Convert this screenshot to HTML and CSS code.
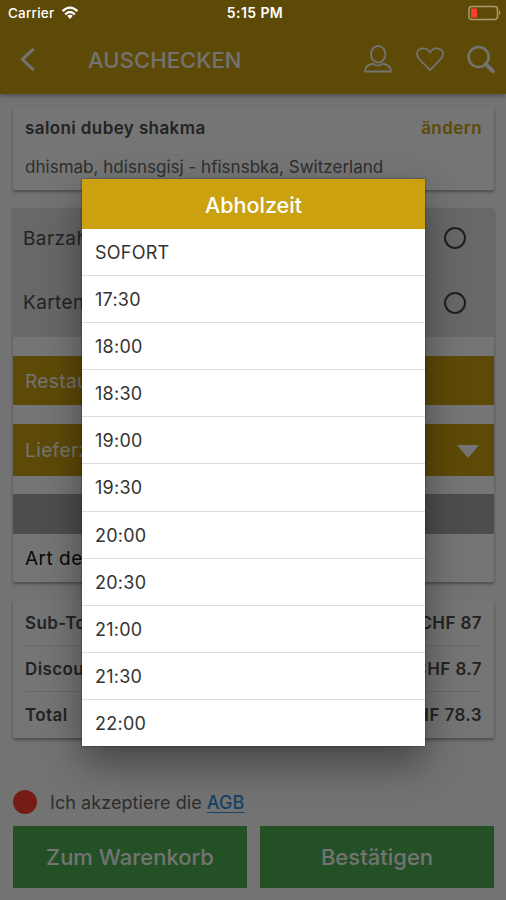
FILE: index.html
```html
<!DOCTYPE html>
<html lang="de">
<head>
<meta charset="utf-8">
<title>Auschecken</title>
<link rel="stylesheet" href="styles.css">
</head>
<body>
<div class="app">
  <header class="header">
    <svg class="back" width="16" height="26" viewBox="0 0 16 26"><path d="M13.6 1.8 2.4 12.4 13.6 23"/></svg>
    <h1 class="title">AUSCHECKEN</h1>
    <div class="actions">
      <svg width="28" height="30" viewBox="0 0 28 30"><ellipse cx="14.2" cy="9.3" rx="7.2" ry="8.3"/><path d="M9 18.6C5 19.6 1.2 20.6 1.2 26.5H26.8C26.8 20.6 23 19.6 19 18.6 16 21.2 12 21.2 9 18.6Z"/></svg>
      <svg width="28" height="30" viewBox="0 0 28 30"><path d="M14 25.2 3.2 14C-1.4 8.4 1.8 3.3 7.4 3.3 10.8 3.3 12.8 5 14 7.6 15.2 5 17.2 3.3 20.6 3.3 26.2 3.3 29.4 8.4 24.8 14Z"/></svg>
      <svg class="search" width="28" height="30" viewBox="0 0 28 30"><circle cx="11.6" cy="12" r="10"/><path class="handle" d="m18.8 19.2 7 7"/></svg>
    </div>
  </header>

  <main class="content">
    <section class="card address">
      <div class="line"><b>saloni dubey shakma</b><a class="change">ändern</a></div>
      <p>dhismab, hdisnsgisj - hfisnsbka, Switzerland</p>
    </section>

    <section class="card order">
      <div class="payments">
        <div class="payment"><span>Barzah</span><i class="radio"></i></div>
        <div class="payment"><span>Karten</span><i class="radio"></i></div>
      </div>
      <div class="bar restaurant">Restau</div>
      <div class="bar delivery">Lieferz<i class="caret"></i></div>
      <div class="strip"></div>
      <div class="kind">Art de</div>
    </section>

    <section class="card totals">
      <div class="line"><span>Sub-To</span><span>CHF 87</span></div>
      <div class="line"><span>Discou</span><span>CHF 8.7</span></div>
      <div class="line"><span>Total</span><span>CHF 78.3</span></div>
    </section>
  </main>

  <footer class="footer">
    <div class="terms"><i class="dot"></i><span>Ich akzeptiere die <a>AGB</a></span></div>
    <div class="buttons"><button>Zum Warenkorb</button><button>Bestätigen</button></div>
  </footer>
</div>

<div class="backdrop">
  <div class="modal">
    <h2>Abholzeit</h2>
    <ul>
      <li>SOFORT</li><li>17:30</li><li>18:00</li><li>18:30</li><li>19:00</li><li>19:30</li><li>20:00</li><li>20:30</li><li>21:00</li><li>21:30</li><li>22:00</li>
    </ul>
  </div>
</div>

<div class="status">
  <span class="carrier">Carrier
    <svg width="18" height="14" viewBox="0 0 18 14"><path d="M1.5 5.2Q9-2 16.5 5.2M4.2 8.3Q9 3.7 13.8 8.3"/><path class="fill" d="M6.2 9.8Q9 7.6 11.8 9.8L9 13Z"/></svg>
  </span>
  <span class="time">5:15 PM</span>
  <svg class="battery" width="34" height="16" viewBox="0 0 34 16"><rect class="case" x="1" y="1.5" width="28.5" height="13" rx="3"/><rect class="level" x="3" y="3.5" width="6" height="9" rx="1"/><path class="tip" d="M31 5.3q2.5 2.7 0 5.4Z"/></svg>
</div>
</body>
</html>
```

FILE: styles.css
```css
* { box-sizing: border-box; margin: 0; padding: 0; }

body {
  width: 506px;
  height: 900px;
  overflow: hidden;
  background: #fafafa;
  color: #4d4d4d;
  font: 17px/1.2 Inter, "Liberation Sans", sans-serif;
}

.app { height: 900px; display: flex; flex-direction: column; }

.header {
  height: 94px;
  flex: none;
  display: flex;
  align-items: center;
  padding: 26px 11px 0 20px;
  background: #cba110;
  color: #fafafa;
  box-shadow: 0 2px 4px rgba(0, 0, 0, .3);
}
.header svg { fill: none; stroke: #fafafa; stroke-width: 1.8; stroke-linejoin: round; }
.header .back { stroke-width: 3; }
.title { flex: 1; margin-left: 52px; font-size: 22px; font-weight: 500; letter-spacing: .1px; }
.actions { display: flex; gap: 23.5px; }
.header .search { stroke-width: 2.6; }
.header .handle { stroke-width: 4; stroke-linecap: round; }

.content { flex: 1; padding: 13px 12px 0 13px; }
.card { background: #fff; border-radius: 2px; box-shadow: 0 2px 3px rgba(0, 0, 0, .35); }
.line { display: flex; justify-content: space-between; }

.address { height: 83px; margin-bottom: 18px; padding: 11px 12px 0; }
.address b { font-weight: 600; letter-spacing: .4px; }
.address .change { color: #cba110; font-weight: 600; letter-spacing: .45px; }
.address p { margin-top: 19px; font-size: 17px; letter-spacing: .02px; color: #666; }

.order { height: 374px; margin-bottom: 18px; }
.payments { height: 129px; margin-left: -2px; padding: 0 28px 0 12px; background: #e3e3e3; }
.payment { height: 64.5px; display: flex; align-items: center; justify-content: space-between; padding-bottom: 4px; font-size: 19px; letter-spacing: .4px; }
.payment span { padding-top: 2px; }
.radio { width: 22px; height: 22px; border: 2px solid #444; border-radius: 50%; }
.bar { display: flex; align-items: center; justify-content: space-between; padding: 3px 15px 0 12px; background: #cba110; color: #fafafa; font-size: 19px; letter-spacing: .4px; }
.restaurant { height: 49px; margin-top: 19px; }
.delivery { height: 52px; margin-top: 19px; padding-top: 2px; }
.caret { border: 11px solid transparent; border-top: 13px solid #fff; border-bottom: 0; }
.strip { height: 40px; margin-top: 18px; background: #a9a9a9; }
.kind { height: 48px; display: flex; align-items: center; padding: 2px 0 0 12px; color: #111; font-size: 19px; letter-spacing: .5px; }

.totals { height: 138px; padding: 0 12px; }
.totals .line { height: 46px; align-items: center; border-bottom: 1px solid #e4e4e4; font-weight: 600; font-size: 17px; letter-spacing: .4px; }
.totals .line:nth-child(-n+2) { padding-top: 2px; }
.totals .line:last-child { border: 0; }

.footer { height: 110px; flex: none; padding: 0 12px 0 13px; }
.terms { display: flex; align-items: center; gap: 13px; height: 24px; margin-bottom: 12px; font-size: 18px; letter-spacing: .06px; color: #666; }
.terms span { padding-top: 2px; }
.terms a { color: #368ee0; font-weight: 500; text-decoration: underline; text-underline-offset: 3px; }
.dot { width: 24px; height: 24px; border-radius: 50%; background: #ff3f2f; }
.buttons { display: flex; gap: 13px; }
.buttons button { flex: 1; height: 62px; border: 0; background: #4caf50; color: #fafafa; font: 500 22px Inter, "Liberation Sans", sans-serif; }

.backdrop {
  position: absolute;
  inset: 0;
  display: flex;
  padding: 179px 81px 0 82px;
  background: rgba(0, 0, 0, .54);
}
.modal { width: 343px; height: 567px; background: #fff; box-shadow: 0 18px 36px rgba(0, 0, 0, .4), 0 0 2px rgba(0, 0, 0, .5); }
.modal h2 { height: 50px; line-height: 52px; text-align: center; font-size: 21.5px; font-weight: 500; background: #cba110; color: #fff; }
.modal ul { list-style: none; }
.modal li { height: 47.1px; line-height: 48px; padding-left: 13px; border-bottom: 1px solid #dcdcdc; font-size: 18px; color: #333; letter-spacing: .25px; }
.modal li:last-child { height: 46px; border: 0; }

.status {
  position: absolute;
  inset: 0 0 auto;
  height: 26px;
  display: grid;
  grid-template-columns: 1fr auto 1fr;
  align-items: center;
  padding: 0 4px 0 8px;
  color: #fff;
  font-size: 13.5px;
  font-weight: 500;
}
.carrier { display: flex; align-items: center; gap: 7px; letter-spacing: .2px; }
.carrier path { fill: none; stroke: #fff; stroke-width: 2.3; }
.carrier .fill { fill: #fff; stroke: none; }
.time { font-weight: 600; font-size: 14px; letter-spacing: .4px; }
.battery { justify-self: end; }
.case { fill: none; stroke: #aa9b72; stroke-width: 1.5; }
.tip { fill: #aa9b72; }
.level { fill: #ff3b30; }
```
